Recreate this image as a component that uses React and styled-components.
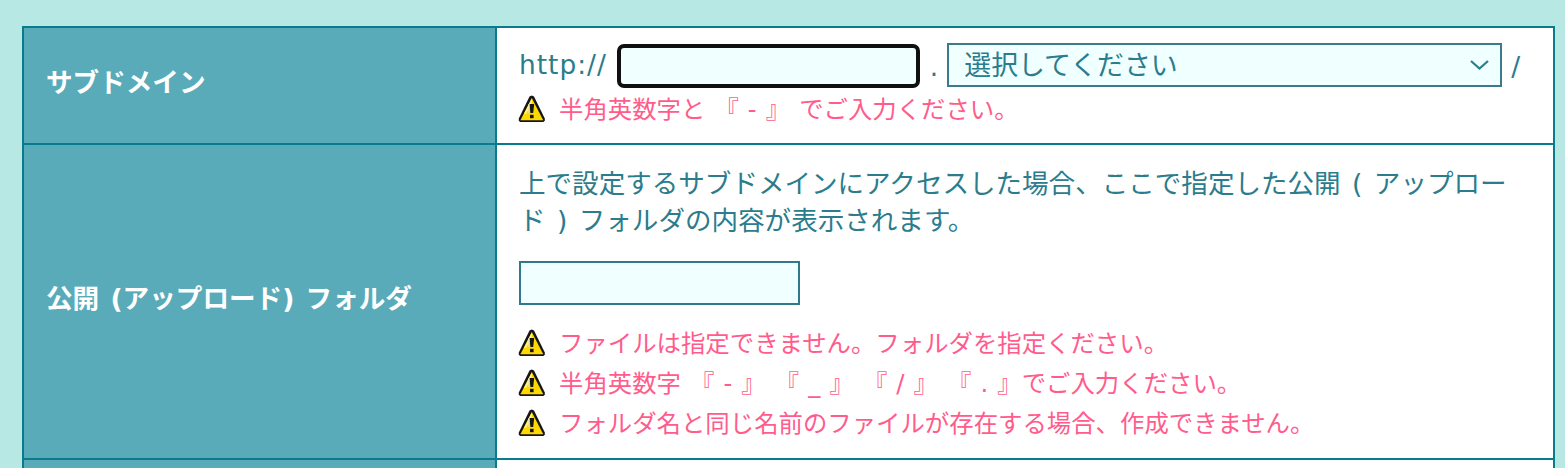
import React from "react";
import styled, { createGlobalStyle } from "styled-components";

const Global = createGlobalStyle`
  html, body { margin: 0; padding: 0; height: 468px; overflow: hidden; background: #b8e8e4; }
  body { font-family: "DejaVu Sans", "Noto Sans CJK JP", sans-serif; }
`;
const Page = styled.main`
  padding: 26px 10px 0 22px;
`;
const Table = styled.table`
  width: 1533px;
  border-collapse: separate;
  border-spacing: 0;
  table-layout: fixed;
  border-top: 2px solid #087c8c;
  border-left: 2px solid #087c8c;
`;
const Head = styled.th`
  width: 449px;
  box-sizing: content-box;
  padding: 0 0 10px 22px;
  background: #5aabb9;
  color: #fff;
  text-align: left;
  border-right: 2px solid #087c8c;
  border-bottom: 2px solid #087c8c;
`;
const Label = styled.span`
  font-family: "DejaVu Sans", "Noto Sans CJK JP", sans-serif;
  font-size: 26.6px;
  font-weight: 700;
  word-spacing: 2px;
`;
const Cell = styled.td`
  background: #fff;
  color: #2b7c8c;
  padding: ${(p) => p.$pad};
  border-right: 2px solid #087c8c;
  border-bottom: 2px solid #087c8c;
  font-family: "DejaVu Sans", "Noto Sans CJK JP", sans-serif;
  font-size: 26.56px;
  vertical-align: top;
`;
const Row = styled.div`
  display: flex;
  align-items: center;
  height: 44px;
`;
const Proto = styled.span`
  font-size: 26.4px;
  letter-spacing: 1px;
  margin: -3px 10px 0 0;
`;
const Sep = styled.span`
  font-size: 26.4px;
  margin: ${(p) => p.$m};
`;
const TextInput = styled.input`
  box-sizing: border-box;
  display: block;
  width: ${(p) => p.$w}px;
  height: 44px;
  background: #f0ffff;
  border: ${(p) => (p.$focus ? "4px solid #101010" : "2px solid #2f7a8a")};
  border-radius: ${(p) => (p.$focus ? "7px" : "0")};
  outline: none;
  padding: 0;
  flex: none;
`;
const SelectBox = styled.div`
  box-sizing: border-box;
  width: 555px;
  height: 44px;
  margin-top: -2px;
  background: #f0ffff;
  border: 2px solid #3a7a8a;
  display: flex;
  align-items: center;
  justify-content: space-between;
  padding: 0 11px 0 15px;
  font-size: 26.9px;
  color: #2b7c8c;
  flex: none;
`;
const SelectText = styled.span`
  margin-top: -4px;
`;
const Para = styled.p`
  margin: 0;
  line-height: 36.5px;
  word-spacing: 3px;
`;
const Notes = styled.ul`
  list-style: none;
  margin: ${(p) => p.$m};
  padding: 0;
`;
const Note = styled.li`
  display: flex;
  align-items: center;
  gap: 13px;
  height: 40px;
  margin-left: -1px;
  color: #ff5c8c;
  font-size: 24.4px;
  word-spacing: 1.3px;
  white-space: pre;
`;
const FolderField = styled.div`
  margin-top: 22px;
  height: 44px;
`;
const EmptyRow = styled.td`
  height: 120px;
  background: ${(p) => (p.$head ? "#5aabb9" : "#fff")};
  border-right: 2px solid #087c8c;
`;
const Icon = styled.svg`
  flex: none;
`;
const WarnIcon = styled(Icon)`
  margin-top: 3px;
`;

const Warn = () => (
  <WarnIcon width="28" height="28" viewBox="0 0 28 28" aria-hidden="true">
    <path d="M13.8 0.5 L11.5 1.5 L0.8 23.5 L0.8 25.5 L2 27 L25.5 27 L26.8 25.5 L26.8 23.5 L16 1.5 Z" fill="#161616" />
    <path d="M13.8 3 L2.4 25.2 L25.2 25.2 Z" fill="#ffd800" />
    <path d="M13.8 3.5 L6 19 L8 19 L13.8 8 Z" fill="#fff48a" />
    <path d="M11.4 9 L16.2 9 L15.2 18 L12.4 18 Z" fill="#161616" />
    <rect x="12" y="19.8" width="3.6" height="3.4" fill="#161616" />
    <rect x="10.4" y="9" width="1" height="9" fill="#e8e8c8" />
  </WarnIcon>
);

const Chevron = () => (
  <Icon width="19" height="10" viewBox="0 0 19 10" aria-hidden="true">
    <path d="M1 1 L9.5 8.5 L18 1" fill="none" stroke="#2b7c8c" strokeWidth="2.2" />
  </Icon>
);

export default function App() {
  return (
    <Page>
      <Global />
      <Table>
        <tbody>
          <tr>
            <Head scope="row"><Label>サブドメイン</Label></Head>
            <Cell $pad="16px 0 16px 22px">
              <Row>
                <Proto>http://</Proto>
                <TextInput $w={303} $focus />
                <Sep $m="0 9px 0 10px">.</Sep>
                <SelectBox>
                  <SelectText>選択してください</SelectText>
                  <Chevron />
                </SelectBox>
                <Sep $m="0 0 0 9px">/</Sep>
              </Row>
              <Notes $m="-1px 0 0">
                <Note><Warn />半角英数字と 『 - 』 でご入力ください。</Note>
              </Notes>
            </Cell>
          </tr>
          <tr>
            <Head scope="row"><Label>公開 (アップロード) フォルダ</Label></Head>
            <Cell $pad="21px 40px 17px 22px">
              <Para>上で設定するサブドメインにアクセスした場合、ここで指定した公開 ( アップロード ) フォルダの内容が表示されます。</Para>
              <FolderField><TextInput $w={281} /></FolderField>
              <Notes $m="16px 0 0">
                <Note><Warn />ファイルは指定できません。フォルダを指定ください。</Note>
                <Note><Warn />半角英数字 『 - 』 『 _ 』 『 / 』 『 . 』でご入力ください。</Note>
                <Note><Warn />フォルダ名と同じ名前のファイルが存在する場合、作成できません。</Note>
              </Notes>
            </Cell>
          </tr>
          <tr>
            <EmptyRow $head />
            <EmptyRow />
          </tr>
        </tbody>
      </Table>
    </Page>
  );
}
